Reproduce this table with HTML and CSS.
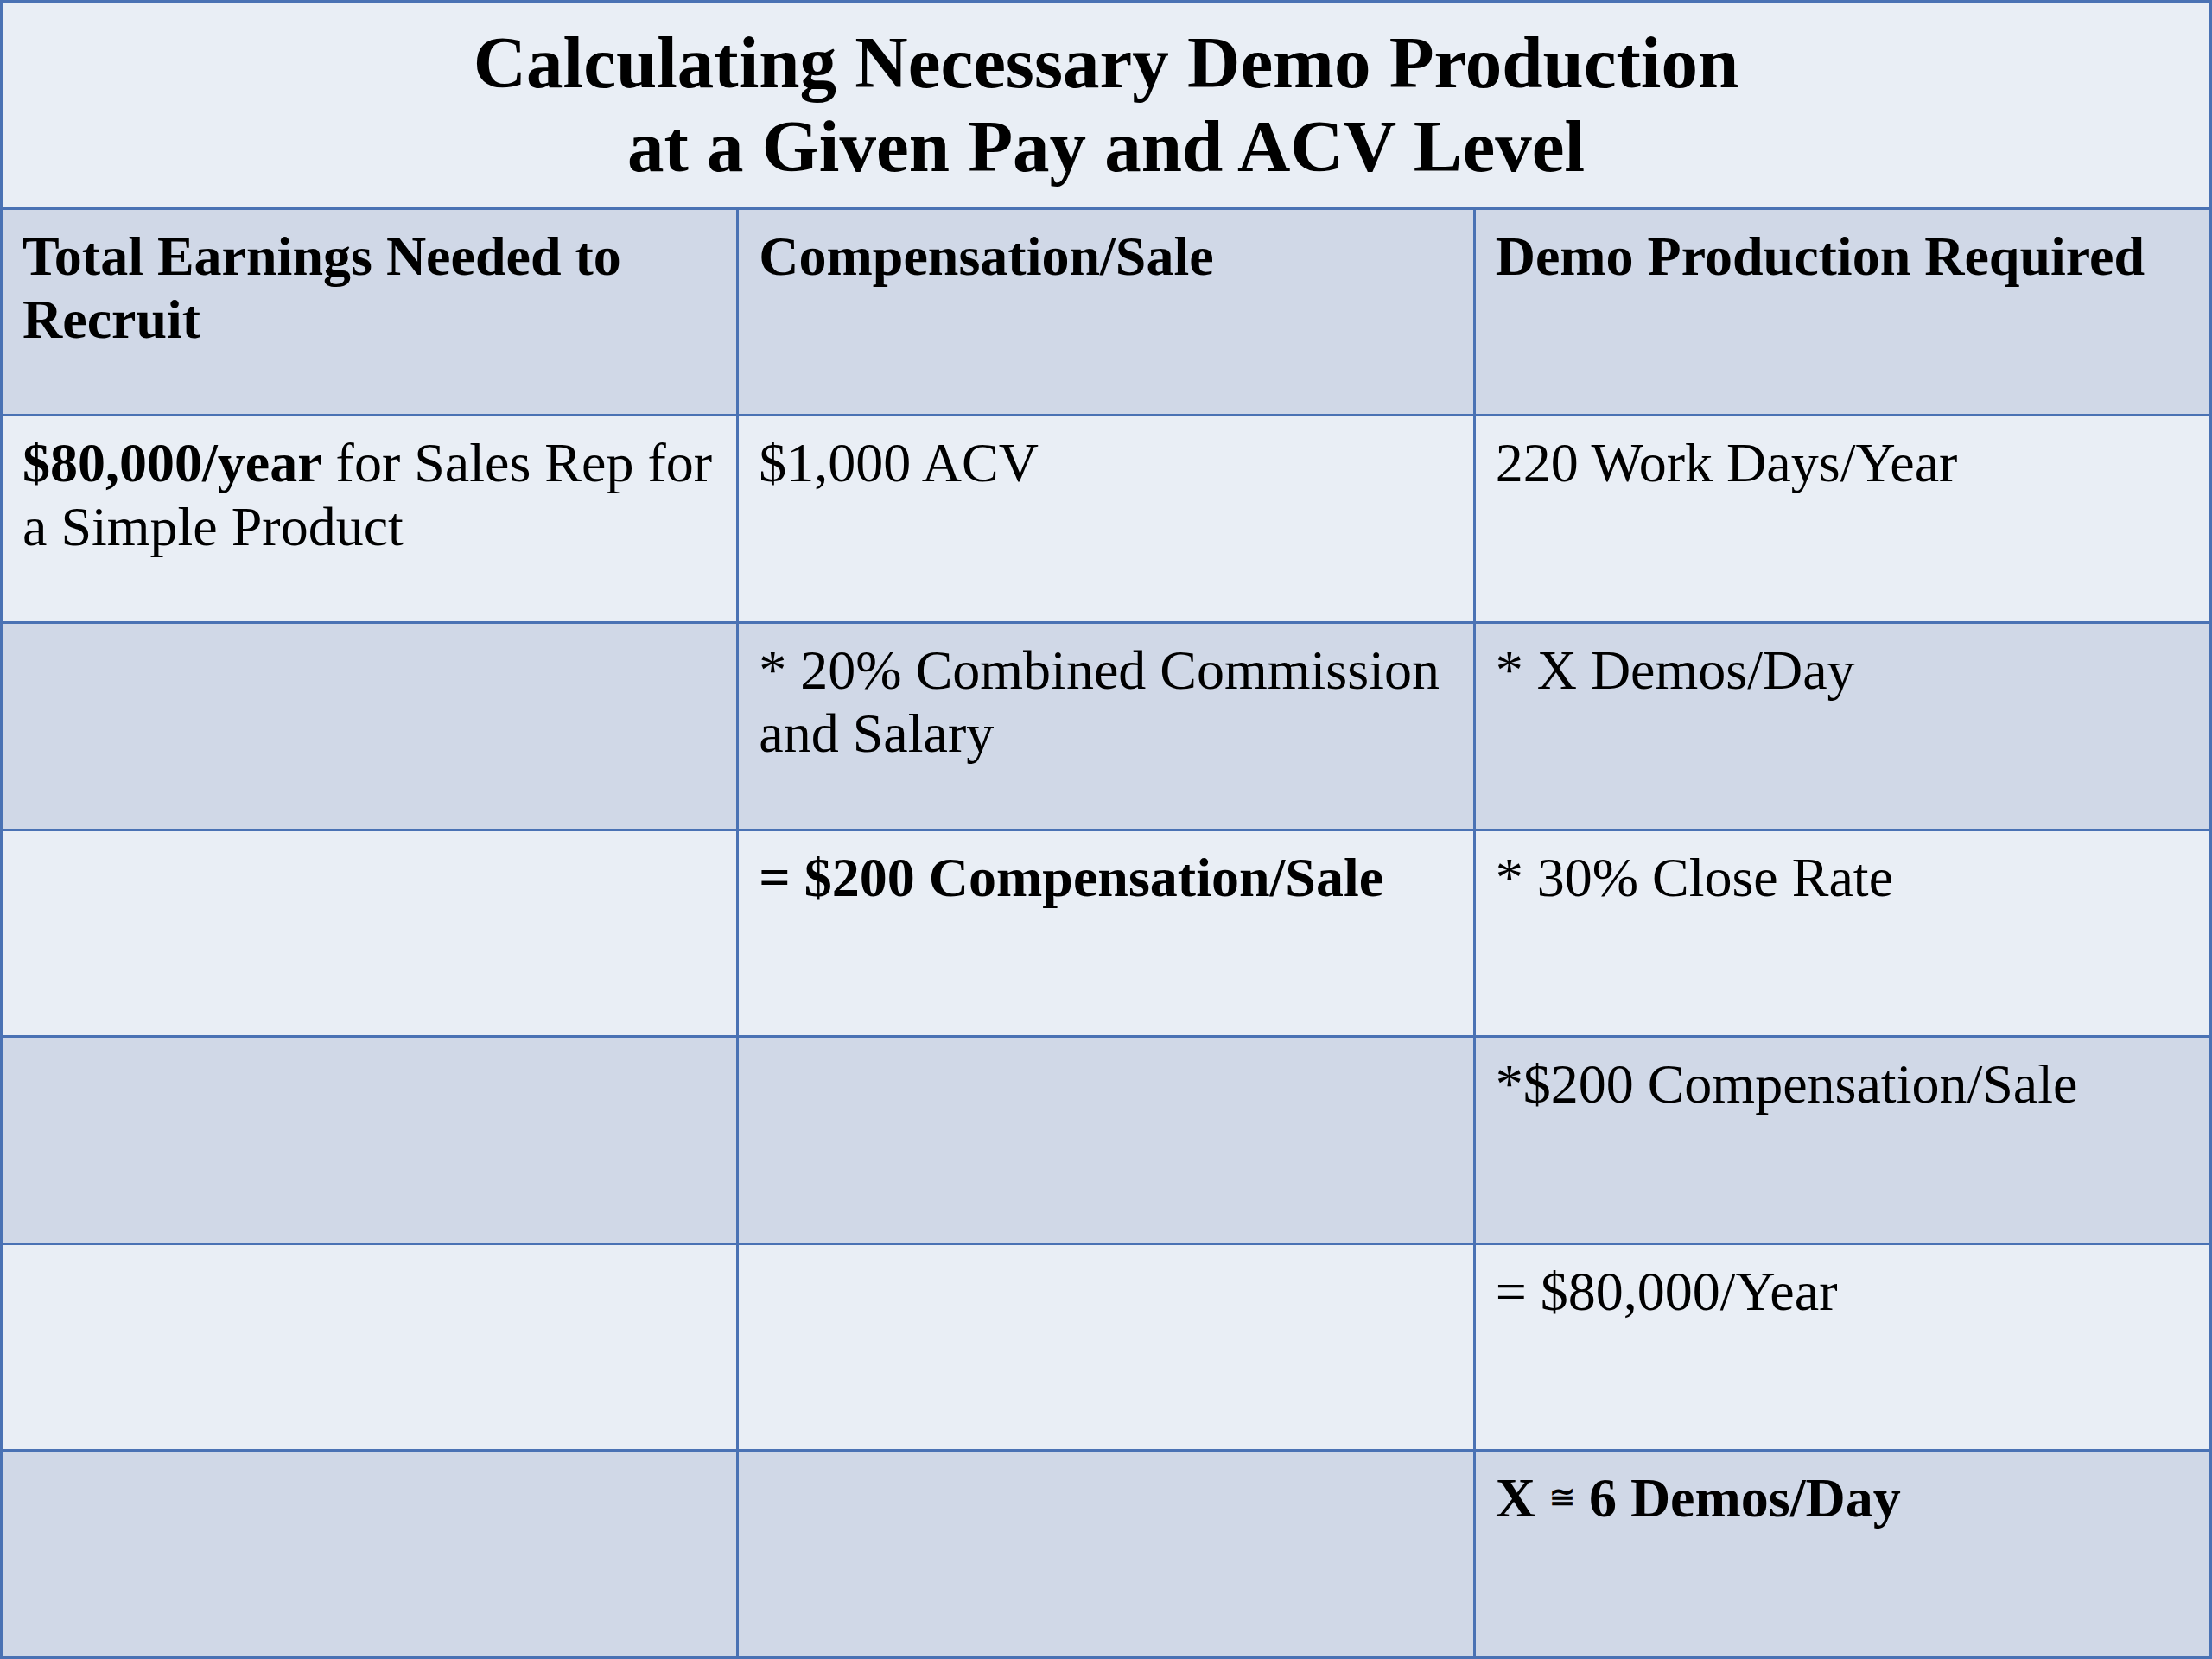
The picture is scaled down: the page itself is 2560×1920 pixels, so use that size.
FILE: index.html
```html
<!DOCTYPE html>
<html>
<head>
<meta charset="utf-8">
<link rel="stylesheet" href="styles.css">
</head>
<body>
<table class="calc">
  <colgroup>
    <col class="col">
    <col class="col">
    <col class="col">
  </colgroup>
  <tr class="title-row light">
    <td colspan="3" class="title">Calculating Necessary Demo Production<br>at a Given Pay and ACV Level</td>
  </tr>
  <tr class="dark head">
    <td><b>Total Earnings Needed to Recruit</b></td>
    <td><b>Compensation/Sale</b></td>
    <td><b>Demo Production Required</b></td>
  </tr>
  <tr class="light">
    <td><b>$80,000/year</b> for Sales Rep for a Simple Product</td>
    <td>$1,000 ACV</td>
    <td>220 Work Days/Year</td>
  </tr>
  <tr class="dark">
    <td></td>
    <td>* 20% Combined Commission and Salary</td>
    <td>* X Demos/Day</td>
  </tr>
  <tr class="light">
    <td></td>
    <td><b>= $200 Compensation/Sale</b></td>
    <td>* 30% Close Rate</td>
  </tr>
  <tr class="dark">
    <td></td>
    <td></td>
    <td>*$200 Compensation/Sale</td>
  </tr>
  <tr class="light">
    <td></td>
    <td></td>
    <td>= $80,000/Year</td>
  </tr>
  <tr class="dark">
    <td></td>
    <td></td>
    <td><b>X <span class="approx">≅</span> 6 Demos/Day</b></td>
  </tr>
</table>
</body>
</html>
```

FILE: styles.css
```css
html, body {
  margin: 0;
  padding: 0;
  background: #e9eef5;
}

.calc {
  width: 2560px;
  height: 1920px;
  border-collapse: collapse;
  table-layout: fixed;
  font-family: "Liberation Serif", "Times New Roman", serif;
  color: #000;
}

.col {
  width: 33.333%;
}

.calc tr {
  height: 200px;
}

.calc td {
  border: 3px solid #4a72b4;
  vertical-align: top;
  padding: 17px 22px 0 23px;
  font-size: 64px;
  line-height: 1.15;
  box-sizing: border-box;
}

.light td {
  background: #e9eef5;
}

.dark td {
  background: #d0d8e7;
}

.calc td.title {
  text-align: center;
  vertical-align: middle;
  font-weight: bold;
  font-size: 85px;
  line-height: 1.15;
  padding: 0;
}

.approx {
  font-size: 36px;
  vertical-align: 10px;
}
```
